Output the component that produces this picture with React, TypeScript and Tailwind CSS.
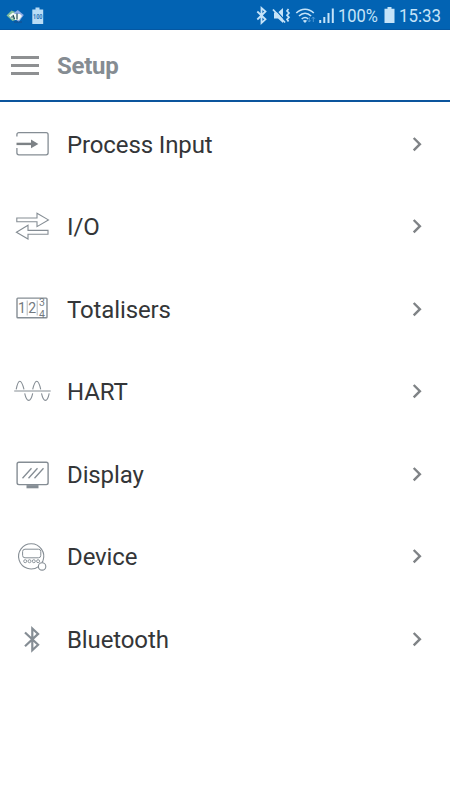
import React from 'react';

type IconProps = { children: React.ReactNode };

function RowIcon({ children }: IconProps) {
  return (
    <svg viewBox="0 0 40 32" className="w-10 h-8 shrink-0" fill="none" stroke="#858d94" strokeWidth="1.1">
      {children}
    </svg>
  );
}

function InputIcon() {
  return (
    <RowIcon>
      <path d="M3.9 8.500V6.700a2 2 0 0 1 2-2h27.200a2 2 0 0 1 2 2v18.100a2 2 0 0 1-2 2H5.900a2 2 0 0 1-2-2V20" strokeWidth="1.300" />
      <path d="M3.500 15.900H19" strokeWidth="2.400" stroke="#7d8286" />
      <path d="M18 11.500l7.400 4.400-7.400 4.400z" fill="#7d8286" stroke="none" />
    </RowIcon>
  );
}

function IoIcon() {
  return (
    <RowIcon>
      <path d="M3.800 8H24V3.200L35.400 9.900 24 16.600V11.800H3.800z" />
      <path d="M35 20.400H15V15.300L3.400 22.200 15 29V24.300H35z" />
    </RowIcon>
  );
}

function TotalisersIcon() {
  return (
    <RowIcon>
      <rect x="4" y="5.100" width="30" height="19.600" rx="0.800" strokeWidth="1.400" />
      <path d="M14.200 7.500v15M24.200 7.500v15" strokeWidth="0.800" stroke="#a0a6ab" />
      <g fill="#737a80" stroke="none" fontFamily="Roboto, sans-serif" fontSize="14">
        <text x="5" y="20">1</text>
        <text x="15.200" y="20">2</text>
        <text x="26" y="12.900" fontSize="10.500">3</text>
        <text x="26" y="24.600" fontSize="10.500">4</text>
      </g>
    </RowIcon>
  );
}

function HartIcon() {
  return (
    <RowIcon>
      <path d="M1.200 16h36.500" strokeWidth="1.200" />
      <path d="M3.200 14.400c1-5.200 2.100-8.200 3.600-8.200s2.900 3 4.200 8.200" />
      <path d="M11.700 18.400c1 4.500 2.200 7 4 7s3-2.500 4-7" />
      <path d="M19.700 14.400c1.200-5.200 2.300-8.200 4-8.200s2.900 3 4 8.200" />
      <path d="M28.500 18.400c1 4.500 2.200 7 3.900 7s2.900-2.500 3.800-7" />
    </RowIcon>
  );
}

function DisplayIcon() {
  return (
    <RowIcon>
      <rect x="4.100" y="4.200" width="31" height="22.400" rx="1.800" strokeWidth="1.400" />
      <path d="M13.500 27.100h12v3.200h-12z" fill="#858d94" stroke="none" />
      <path d="M9.500 20.300l9-10M15.500 20.300l9-10M21.500 20.300l9-10" strokeWidth="1.300" />
    </RowIcon>
  );
}

function DeviceIcon() {
  return (
    <RowIcon>
      <path d="M25.500 26.600A12.600 12.600 0 1 1 30.100 20.400" />
      <path d="M30.100 20.400a5 5 0 0 1-1.300 2.300" />
      <rect x="9.600" y="9.200" width="18.200" height="8.600" rx="2.400" strokeWidth="1" />
      <g strokeWidth="0.900">
        <circle cx="12.200" cy="21.200" r="1.500" />
        <circle cx="16.500" cy="21.200" r="1.500" />
        <circle cx="20.800" cy="21.200" r="1.500" />
        <circle cx="25.100" cy="21.200" r="1.500" />
      </g>
      <circle cx="29.100" cy="26.400" r="3.700" fill="#fff" />
    </RowIcon>
  );
}

function BluetoothIcon() {
  return (
    <RowIcon>
      <path d="M12 9.500L25.100 21.700 19.300 27.200V5.500l5.800 5.400L12 23.200" strokeWidth="2.200" />
    </RowIcon>
  );
}

const ITEMS = [
  { label: 'Process Input', icon: <InputIcon /> },
  { label: 'I/O', icon: <IoIcon /> },
  { label: 'Totalisers', icon: <TotalisersIcon /> },
  { label: 'HART', icon: <HartIcon /> },
  { label: 'Display', icon: <DisplayIcon /> },
  { label: 'Device', icon: <DeviceIcon /> },
  { label: 'Bluetooth', icon: <BluetoothIcon /> },
];

function StatusBar() {
  return (
    <div className="h-[30px] bg-[#0263b3] border-b border-[#0457a2] flex items-center justify-between text-[#c5e3f8]">
      <svg viewBox="0 0 50 30" className="w-[50px] h-[30px] mt-px">
        <path d="M6.500 15.500l5-5 4 1.500v8l-3 1z" fill="#82bd9b" />
        <path d="M23.800 15l-6-5-4 3v5l5 4z" fill="#8baae5" />
        <path d="M9 15.500l4-3 2 1.500h5l2 2-3 4h-4l-1-3-2 2z" fill="#f4fbf5" />
        <path d="M13 15l1.500 4M17 13.500v6M11 17h2" stroke="#1c4b56" strokeWidth="1.200" />
        <path d="M14 22h8" stroke="#194c88" />
        <path d="M35.500 7.500h4v2h3.700V24H32.300V9.500h3.200z" fill="#b9dcf5" />
        <text x="33" y="19" fontFamily="Roboto, sans-serif" fontSize="6.500" fontWeight="700" textLength="9.500" lengthAdjust="spacingAndGlyphs" fill="#2773b7">100</text>
      </svg>
      <div className="flex items-center h-full">
        <svg viewBox="254 0 82 30" className="w-[82px] h-[30px] mt-px" fill="none" stroke="currentColor">
          {/* bluetooth */}
          <path d="M257.300 11.500l8.200 7.800-4 3.700V8l4 3.500-8.200 8" strokeWidth="1.800" />
          {/* muted with vibration */}
          <path d="M274 12.500h4l5-4.500v15l-5-4.500h-4z" fill="currentColor" stroke="none" />
          <path d="M275 9.200l11 12.400" stroke="#0263b3" strokeWidth="1.200" />
          <path d="M273 9.500l12 13" strokeWidth="1.800" />
          <path d="M288.500 9l-1.500 2 2 2-2 2.300 2 2-2 2 1.500 2.200" strokeWidth="1.700" />
          {/* wifi */}
          <g strokeWidth="1.600">
            <path d="M296.300 13c5.200-5.100 12.300-5.100 17.500 0" />
            <path d="M299 16c3.700-3.500 8.400-3.500 12.100 0" />
            <path d="M301.700 19c2.100-1.800 4.700-1.800 6.500 0" />
          </g>
          <path d="M305 23l-2.200-2.300q2.200-1.400 4.300 0z" fill="currentColor" stroke="none" />
          <path d="M309.300 17v5M307.800 20.300l1.500 1.700 1.500-1.700M313.300 22v-5M311.800 18.700l1.500-1.700 1.500 1.700" stroke="#4c96d4" />
          {/* signal */}
          <path d="M320.200 23v-3M324.300 23v-6M328.500 23v-10M332.800 23V8.500" strokeWidth="2" />
        </svg>
        <div className="w-[42px] pl-[2px] mt-[3px]">
          <span className="block w-max text-[19px] leading-6 origin-left scale-x-[0.87]">100%</span>
        </div>
        <svg viewBox="0 0 21 30" className="w-[21px] h-[30px] mt-px">
          <path d="M9.500 7h4v1.700h3v14.300H6.500V8.700h3z" fill="currentColor" />
        </svg>
        <div className="w-[51px] mt-[3px]">
          <span className="block w-max text-[19px] leading-6 origin-left scale-x-[0.89]">15:33</span>
        </div>
      </div>
    </div>
  );
}

export default function App() {
  return (
    <div className="w-full h-[800px] bg-white overflow-hidden font-['Roboto',sans-serif]">
      <StatusBar />

      {/* Header */}
      <header className="h-[72px] border-b-2 border-[#0c559d] flex items-center pl-[11px]">
        <button className="flex flex-col gap-[5px] w-7 h-[19px]" aria-label="Menu">
          <span className="block w-full h-[3px] bg-[#8e9092]" />
          <span className="block w-full h-[3px] bg-[#8e9092]" />
          <span className="block w-full h-[3px] bg-[#8e9092]" />
        </button>
        <h1 className="ml-[18px] mt-px text-2xl leading-8 font-bold tracking-[-0.25px] text-[#858c92]">Setup</h1>
      </header>

      {/* Menu */}
      <nav className="pt-[0.5px]">
        {ITEMS.map((item) => (
          <a key={item.label} className="h-[82.5px] flex items-center pl-[13px] pr-[26px]">
            {item.icon}
            <span className="flex-1 ml-[14px] mt-[2px] text-2xl leading-8 tracking-[-0.12px] text-[#343638]">{item.label}</span>
            <svg viewBox="0 0 14 16" className="w-[14px] h-4" fill="none" stroke="#7f8386" strokeWidth="2.400">
              <path d="M3.700 2l6.200 6.200-6.200 6.200" />
            </svg>
          </a>
        ))}
      </nav>
    </div>
  );
}
